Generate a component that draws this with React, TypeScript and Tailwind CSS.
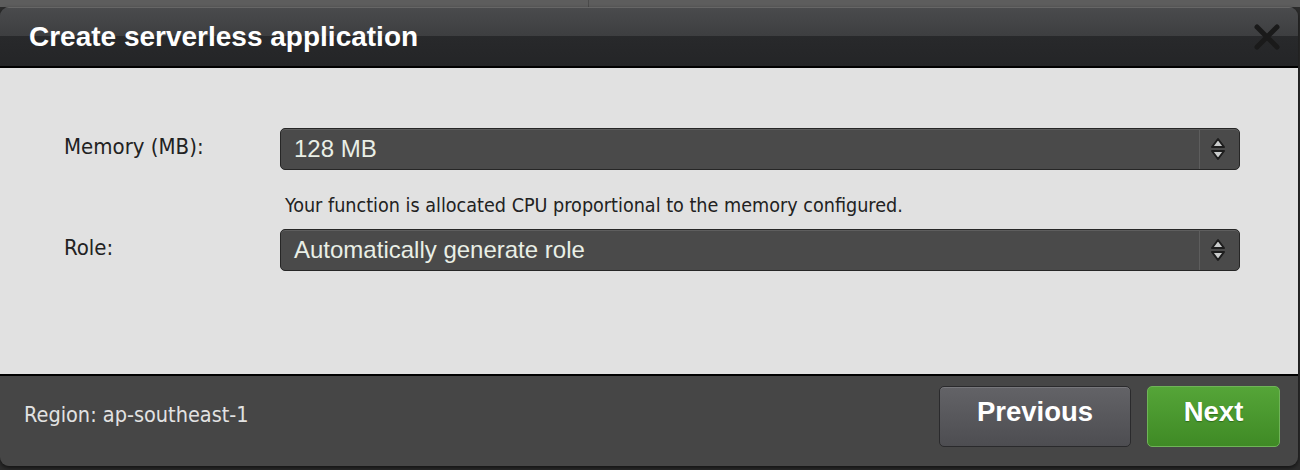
import React from "react";

function Arrows() {
  return (
    <svg width="16" height="24" viewBox="0 0 16 24">
      <path d="M8 2 L14 10 L2 10 Z" fill="#c9cbcb" stroke="#1d1d1d" strokeWidth="2" strokeLinejoin="round" />
      <path d="M2 14 L14 14 L8 22 Z" fill="#c9cbcb" stroke="#1d1d1d" strokeWidth="2" strokeLinejoin="round" />
    </svg>
  );
}

function Select({ value }: { value: string }) {
  return (
    <div className="flex h-[42px] w-[960px] items-stretch rounded-[5px] border border-[#262626] bg-[#4a4a4a] shadow-[inset_0_1px_0_#5e5e5e]">
      <div className="flex flex-1 items-center pl-[13px] text-[24px] text-[#e9efe6] [font-family:'Liberation_Sans',Arial,sans-serif]">
        {value}
      </div>
      <div className="flex w-[40px] items-center justify-center border-l border-[#5d5d5d] pr-[3px]">
        <Arrows />
      </div>
    </div>
  );
}

export default function App() {
  const tahoma = "[font-family:'DejaVu_Sans_Condensed','DejaVu_Sans',sans-serif]";
  return (
    <div className="flex h-[470px] w-[1300px] flex-col overflow-hidden bg-[#2c2c2c]">
      <div className="flex h-[7px] shrink-0 bg-[#5d5d5d]">
        <div className="w-[589px] border-r border-[#4b4b4b]" />
      </div>
      <div className="flex w-[1298px] shrink-0 flex-col overflow-hidden rounded-[9px] shadow-[0_2px_4px_rgba(0,0,0,0.6)]">
        <div className="flex h-[61px] shrink-0 items-center justify-between border-b-2 border-black bg-[linear-gradient(to_bottom,#4a4b4d_0%,#3d3e40_50%,#28292b_50%,#242527_100%)] pl-[29px] pr-[17px] shadow-[inset_0_1px_0_#666]">
          <div className="text-[28px] font-bold leading-none text-white [font-family:'Liberation_Sans',Arial,sans-serif]">
            Create serverless application
          </div>
          <svg width="28" height="28" viewBox="0 0 28 28" className="mt-[1px]">
            <path d="M4 4 L24 24 M24 4 L4 24" stroke="#1a1a1a" strokeWidth="5" strokeLinecap="round" />
          </svg>
        </div>
        <div className="flex h-[308px] shrink-0 flex-col border-b-2 border-black bg-[#e1e1e1] pl-[64px] pt-[60px]">
          <div className="flex items-center">
            <div className={`mb-[4px] w-[216px] text-[22px] leading-[26px] text-[#222] ${tahoma}`}>Memory (MB):</div>
            <Select value="128 MB" />
          </div>
          <div className={`ml-[221px] mt-[25px] text-[19.6px] leading-[22px] text-[#222] ${tahoma}`}>
            Your function is allocated CPU proportional to the memory configured.
          </div>
          <div className="mt-[12px] flex items-center">
            <div className={`mb-[4px] w-[216px] text-[22px] leading-[26px] text-[#222] ${tahoma}`}>Role:</div>
            <Select value="Automatically generate role" />
          </div>
        </div>
        <div className="flex h-[90px] shrink-0 items-start justify-between bg-[#464646] pl-[24px] pr-[18px] pt-[10px]">
          <div className={`mt-[17px] text-[21.5px] leading-[24px] text-[#e2e2e2] ${tahoma}`}>Region: ap-southeast-1</div>
          <div className="flex gap-[16px]">
            <button className="flex h-[61px] w-[192px] items-center justify-center rounded-[5px] border border-[#2a2a2c] bg-[linear-gradient(to_bottom,#636367,#4d4d51)] pb-[10px] text-[27.5px] font-bold text-white shadow-[inset_0_1px_0_#77777b] [font-family:'Liberation_Sans',Arial,sans-serif]">
              Previous
            </button>
            <button className="flex h-[61px] w-[133px] items-center justify-center rounded-[5px] border border-[#6fb458] bg-[linear-gradient(to_bottom,#55a538,#3f8a25)] pb-[10px] text-[27.5px] font-bold text-white [font-family:'Liberation_Sans',Arial,sans-serif] [text-shadow:0_1px_1px_#2f6e1a]">
              Next
            </button>
          </div>
        </div>
      </div>
    </div>
  );
}
